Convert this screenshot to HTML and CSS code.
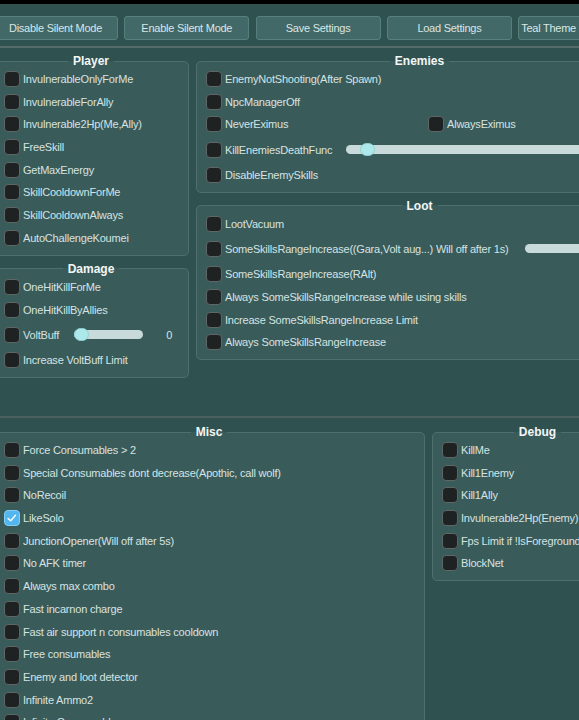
FILE: index.html
```html
<!DOCTYPE html>
<html>
<head>
<meta charset="utf-8">
<link rel="stylesheet" href="styles.css">
</head>
<body>
<div class="topbar"></div>
<div class="app">
  <div class="toolbar">
    <div class="btn">Disable Silent Mode</div>
    <div class="btn">Enable Silent Mode</div>
    <div class="btn">Save Settings</div>
    <div class="btn">Load Settings</div>
    <div class="btn combo">Teal Theme</div>
  </div>
  <div class="sep"></div>
  <div class="upper">
    <div class="col col-left">
      <fieldset class="panel">
        <legend>Player</legend>
        <div class="rows">
          <div class="row"><span class="cb"></span>InvulnerableOnlyForMe</div>
          <div class="row"><span class="cb"></span>InvulnerableForAlly</div>
          <div class="row"><span class="cb"></span>Invulnerable2Hp(Me,Ally)</div>
          <div class="row"><span class="cb"></span>FreeSkill</div>
          <div class="row"><span class="cb"></span>GetMaxEnergy</div>
          <div class="row"><span class="cb"></span>SkillCooldownForMe</div>
          <div class="row"><span class="cb"></span>SkillCooldownAlways</div>
          <div class="row"><span class="cb"></span>AutoChallengeKoumei</div>
        </div>
      </fieldset>
      <fieldset class="panel">
        <legend>Damage</legend>
        <div class="rows">
          <div class="row"><span class="cb"></span>OneHitKillForMe</div>
          <div class="row"><span class="cb"></span>OneHitKillByAllies</div>
          <div class="row slide"><span class="cb"></span>VoltBuff<span class="track short"><span class="knob k0"></span></span><span class="val">0</span></div>
          <div class="row"><span class="cb"></span>Increase VoltBuff Limit</div>
        </div>
      </fieldset>
    </div>
    <div class="col col-right">
      <fieldset class="panel">
        <legend>Enemies</legend>
        <div class="rows">
          <div class="row"><span class="cb"></span>EnemyNotShooting(After Spawn)</div>
          <div class="row"><span class="cb"></span>NpcManagerOff</div>
          <div class="row pair"><span class="item"><span class="cb"></span>NeverEximus</span><span class="item"><span class="cb"></span>AlwaysEximus</span></div>
          <div class="row slide"><span class="cb"></span>KillEnemiesDeathFunc<span class="track grow"><span class="knob k1"></span></span></div>
          <div class="row"><span class="cb"></span>DisableEnemySkills</div>
        </div>
      </fieldset>
      <fieldset class="panel">
        <legend>Loot</legend>
        <div class="rows">
          <div class="row"><span class="cb"></span>LootVacuum</div>
          <div class="row slide"><span class="cb"></span>SomeSkillsRangeIncrease((Gara,Volt aug...) Will off after 1s)<span class="track grow wide"><span class="knob k2"></span></span></div>
          <div class="row"><span class="cb"></span>SomeSkillsRangeIncrease(RAlt)</div>
          <div class="row"><span class="cb"></span>Always SomeSkillsRangeIncrease while using skills</div>
          <div class="row"><span class="cb"></span>Increase SomeSkillsRangeIncrease Limit</div>
          <div class="row"><span class="cb"></span>Always SomeSkillsRangeIncrease</div>
        </div>
      </fieldset>
    </div>
  </div>
  <div class="sep2"></div>
  <div class="lower">
    <fieldset class="panel misc">
      <legend>Misc</legend>
      <div class="rows">
        <div class="row"><span class="cb"></span>Force Consumables &gt; 2</div>
        <div class="row"><span class="cb"></span>Special Consumables dont decrease(Apothic, call wolf)</div>
        <div class="row"><span class="cb"></span>NoRecoil</div>
        <div class="row"><span class="cb on"><svg viewBox="0 0 16 16" width="14" height="14"><polyline points="3.5,8.5 6.5,11.2 12,4.8" fill="none" stroke="#ffffff" stroke-width="1.6" stroke-linecap="round" stroke-linejoin="round"/></svg></span>LikeSolo</div>
        <div class="row"><span class="cb"></span>JunctionOpener(Will off after 5s)</div>
        <div class="row"><span class="cb"></span>No AFK timer</div>
        <div class="row"><span class="cb"></span>Always max combo</div>
        <div class="row"><span class="cb"></span>Fast incarnon charge</div>
        <div class="row"><span class="cb"></span>Fast air support n consumables cooldown</div>
        <div class="row"><span class="cb"></span>Free consumables</div>
        <div class="row"><span class="cb"></span>Enemy and loot detector</div>
        <div class="row"><span class="cb"></span>Infinite Ammo2</div>
        <div class="row"><span class="cb"></span>Infinite Consumables</div>
      </div>
    </fieldset>
    <fieldset class="panel debug">
      <legend>Debug</legend>
      <div class="rows">
        <div class="row"><span class="cb"></span>KillMe</div>
        <div class="row"><span class="cb"></span>Kill1Enemy</div>
        <div class="row"><span class="cb"></span>Kill1Ally</div>
        <div class="row"><span class="cb"></span>Invulnerable2Hp(Enemy)</div>
        <div class="row"><span class="cb"></span>Fps Limit if !IsForeground</div>
        <div class="row"><span class="cb"></span>BlockNet</div>
      </div>
    </fieldset>
  </div>
</div>
</body>
</html>
```
FILE: styles.css
```css
* { box-sizing: border-box; }
html, body { margin: 0; padding: 0; }
body {
  width: 579px;
  height: 720px;
  overflow: hidden;
  background: #2f5251;
  font-family: "Liberation Sans", Arial, sans-serif;
  font-size: 11px;
  color: #d6e3e2;
}
.topbar { height: 4px; background: #000; }
.app { margin-left: -6px; width: 650px; }
.toolbar {
  display: flex;
  gap: 6.3px;
  padding-top: 12px;
  margin-left: -1px;
}
.btn {
  flex: none;
  width: 125px;
  height: 24px;
  display: flex;
  align-items: center;
  justify-content: center;
  background: #426967;
  border: 1px solid #56807e;
  border-radius: 3px;
  color: #dae6e5;
  letter-spacing: -0.25px;
  white-space: nowrap;
}
.btn.combo { justify-content: flex-start; padding-left: 2px; background: #3f6664; }
.sep { margin-top: 6px; height: 2px; background: #556c6a; }
.upper {
  height: 368px;
  padding-top: 6px;
  display: flex;
  gap: 7px;
  align-items: flex-start;
}
.col { display: flex; flex-direction: column; gap: 6px; }
.col-left { width: 195px; flex: none; }
.col-right { width: 448px; flex: none; }
.panel {
  margin: 0;
  min-width: 0;
  border: 1px solid #4d706e;
  border-radius: 5px;
  background: #395b5a;
  padding: 3px 10px 9px 9px;
}
.panel legend {
  margin: 0 auto;
  padding: 0 5px;
  font-weight: bold;
  font-size: 12px;
  line-height: 14px;
  color: #f3f6f6;
}
.rows { display: flex; flex-direction: column; gap: 6.7px; }
.row {
  display: flex;
  align-items: center;
  gap: 3px;
  height: 16px;
  white-space: nowrap;
  letter-spacing: -0.2px;
}
.row.slide { height: 21px; }
.item { display: flex; align-items: center; gap: 3px; }
.pair .item:first-child { width: 219px; flex: none; }
.cb {
  flex: none;
  width: 16px;
  height: 16px;
  border: 1px solid #5f6766;
  border-radius: 4px;
  background: #1f2222;
  display: flex;
  align-items: center;
  justify-content: center;
}
.cb.on { background: #54b6ee; border-color: #84cdf5; }
.track {
  position: relative;
  height: 9px;
  border-radius: 5px;
  background: #c8dbda;
}
.track.short { width: 69px; flex: none; margin-left: 12px; }
.track.grow { flex: 1; margin-left: 11px; }
.track.wide { margin-left: 13px; }
.knob {
  position: absolute;
  top: -2px;
  width: 15px;
  height: 13px;
  border-radius: 7px;
  background: #ade9ea;
  border: 1px solid #8fd2d3;
}
.knob.k0 { left: 0; }
.knob.k1 { left: 14px; }
.knob.k2 { left: 80px; }
.val { margin-left: 20px; }
.sep2 { height: 2px; background: #4b605e; }
.lower {
  padding-top: 7px;
  display: flex;
  gap: 7px;
  align-items: flex-start;
}
.misc { width: 431px; flex: none; }
.debug { width: 212px; flex: none; }
```
